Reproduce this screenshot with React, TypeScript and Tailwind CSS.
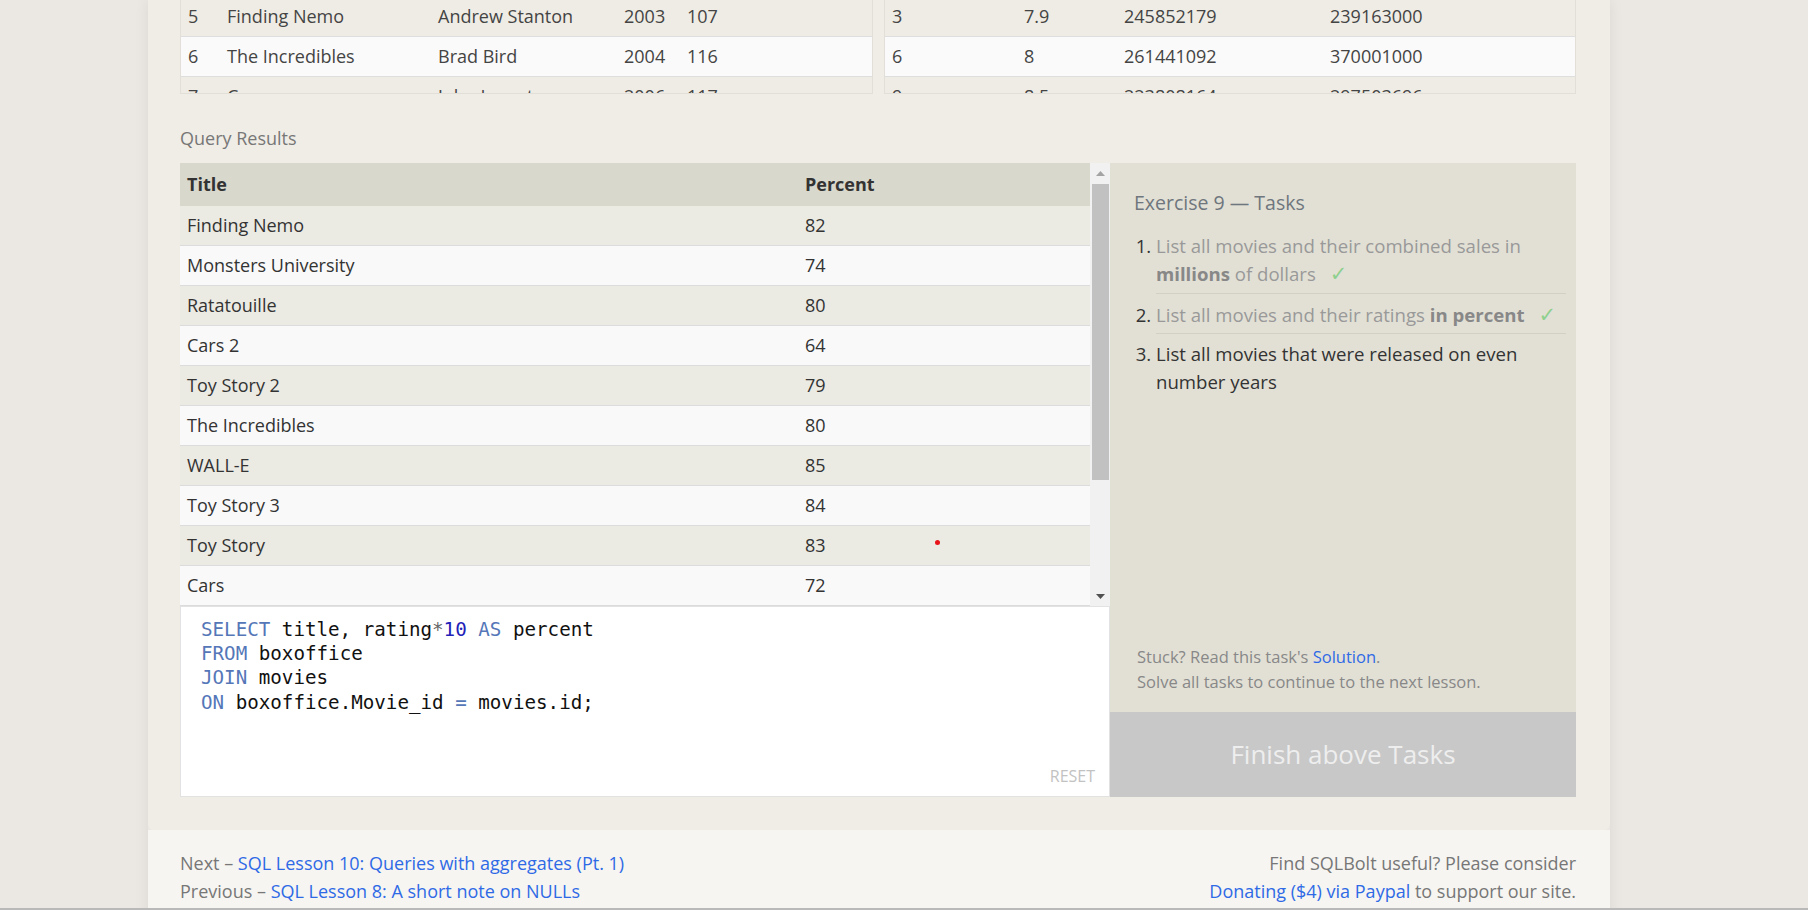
const movies = [
  ["5", "Finding Nemo", "Andrew Stanton", "2003", "107"],
  ["6", "The Incredibles", "Brad Bird", "2004", "116"],
  ["7", "Cars", "John Lasseter", "2006", "117"],
];

const boxoffice = [
  ["3", "7.9", "245852179", "239163000"],
  ["6", "8", "261441092", "370001000"],
  ["9", "8.5", "223808164", "297503696"],
];

const results = [
  ["Finding Nemo", "82"],
  ["Monsters University", "74"],
  ["Ratatouille", "80"],
  ["Cars 2", "64"],
  ["Toy Story 2", "79"],
  ["The Incredibles", "80"],
  ["WALL-E", "85"],
  ["Toy Story 3", "84"],
  ["Toy Story", "83"],
  ["Cars", "72"],
];

function Kw({ children }: { children: string }) {
  return <span className="text-[#5577b8]">{children}</span>;
}

function Check() {
  return (
    <span className="ml-[14px] text-[#8fd08f] font-['DejaVu_Sans',sans-serif] text-[21px] leading-none">
      ✓
    </span>
  );
}

export default function App() {
  return (
    <div className="h-[910px] overflow-hidden bg-[#ebe7e3] border-b-2 border-[#b9b9b9] font-['Open_Sans',sans-serif] text-[#333]">
      <div className="ml-[148px] w-[1462px] shadow-[0_0_14px_rgba(0,0,0,0.07)]">
        <div className="bg-[#f0ede6] rounded-b-[6px] pl-[32px] pr-[34px] pb-[33px]">
          {/* source tables, scrolled */}
          <div className="flex gap-[11px] h-[94px] overflow-hidden text-[18px] text-[#444]">
            <div className="w-[693px] border-x border-b border-[#e2dfd8] overflow-hidden">
              <div className="-mt-[3px]">
                {movies.map((r, i) => (
                  <div
                    key={r[0]}
                    className={`grid grid-cols-[39px_211px_186px_63px_1fr] h-[40px] items-center border-b border-[#dedede] pl-[7px] ${
                      i % 2 === 0 ? "bg-[#efece5]" : "bg-[#fafafa]"
                    }`}
                  >
                    {r.map((c, j) => (
                      <span key={j} className="whitespace-nowrap">
                        {c}
                      </span>
                    ))}
                  </div>
                ))}
              </div>
            </div>
            <div className="w-[692px] border-x border-b border-[#e2dfd8] overflow-hidden">
              <div className="-mt-[3px]">
                {boxoffice.map((r, i) => (
                  <div
                    key={r[0]}
                    className={`grid grid-cols-[132px_100px_206px_1fr] h-[40px] items-center border-b border-[#dedede] pl-[7px] ${
                      i % 2 === 0 ? "bg-[#efece5]" : "bg-[#fafafa]"
                    }`}
                  >
                    {r.map((c, j) => (
                      <span key={j} className="whitespace-nowrap">
                        {c}
                      </span>
                    ))}
                  </div>
                ))}
              </div>
            </div>
          </div>

          <div className="mt-[32px] mb-[13px] text-[18px] leading-[24px] text-[#777]">
            Query Results
          </div>

          <div className="flex">
            {/* results + editor */}
            <div className="w-[930px] flex flex-col">
              <div className="flex h-[443px]">
                <div className="relative flex-1 overflow-hidden text-[18px]">
                  <div className="grid grid-cols-[618px_1fr] h-[43px] items-center bg-[#d9d8cc] font-bold pl-[7px]">
                    <span>Title</span>
                    <span>Percent</span>
                  </div>
                  {results.map((r, i) => (
                    <div
                      key={r[0]}
                      className={`grid grid-cols-[618px_1fr] h-[40px] items-center border-b border-[#dcdcdc] pl-[7px] ${
                        i % 2 === 0 ? "bg-[#ebeae3]" : "bg-[#f9f9f9]"
                      }`}
                    >
                      <span>{r[0]}</span>
                      <span>{r[1]}</span>
                    </div>
                  ))}
                  <div className="absolute left-[755px] top-[377px] w-[5px] h-[5px] rounded-full bg-[#e8141a]" />
                </div>
                <div className="w-[20px] bg-[#f1f1f1] flex flex-col items-center">
                  <div className="h-[20px] flex items-center justify-center">
                    <svg width="9" height="5" viewBox="0 0 9 5">
                      <polygon points="0,5 4.5,0 9,5" fill="#a3a3a3" />
                    </svg>
                  </div>
                  <div className="w-[17px] h-[296px] mt-[1px] bg-[#c1c1c1]" />
                  <div className="flex-1" />
                  <div className="h-[20px] flex items-center justify-center">
                    <svg width="9" height="5" viewBox="0 0 9 5">
                      <polygon points="0,0 9,0 4.5,5" fill="#505050" />
                    </svg>
                  </div>
                </div>
              </div>
              <div className="h-[191px] bg-white border border-[#e2e2e2] flex flex-col">
                <pre className="flex-1 pl-[20px] pt-[11px] font-['DejaVu_Sans_Mono',monospace] text-[19.2px] leading-[24.2px] text-[#111]">
                  <Kw>SELECT</Kw> title, rating<span className="text-[#666]">*</span>
                  <span className="text-[#2222b8]">10</span> <Kw>AS</Kw> percent{"\n"}
                  <Kw>FROM</Kw> boxoffice{"\n"}
                  <Kw>JOIN</Kw> movies{"\n"}
                  <Kw>ON</Kw> boxoffice.Movie_id <Kw>=</Kw> movies.id;
                </pre>
                <div className="flex justify-end pr-[14px] pb-[10px] text-[16px] leading-[20px] text-[#c2c2c2]">
                  RESET
                </div>
              </div>
            </div>

            {/* tasks panel */}
            <div className="w-[466px] bg-[#e2e0d5] flex flex-col">
              <div className="flex-1 pl-[24px] pr-[10px] pt-[26px]">
                <div className="text-[19.5px] leading-[28px] text-[#6f767d]">
                  Exercise 9 — Tasks
                </div>
                <ol className="mt-[15px] list-decimal list-outside pl-[22px] text-[18.6px] leading-[27.7px]">
                  <li className="pb-[6px] border-b border-[#d2d0c5] text-[#999] marker:text-[#333]">
                    List all movies and their combined sales in{" "}
                    <b className="text-[#888]">millions</b> of dollars
                    <Check />
                  </li>
                  <li className="pt-[7px] pb-[4px] border-b border-[#d2d0c5] text-[#999] marker:text-[#333]">
                    List all movies and their ratings{" "}
                    <b className="text-[#888]">in percent</b>
                    <Check />
                  </li>
                  <li className="pt-[6px] text-[#333] marker:text-[#333]">
                    List all movies that were released on even number years
                  </li>
                </ol>
              </div>
              <div className="pl-[27px] pb-[18px] text-[16.5px] leading-[25px] text-[#888]">
                <div>
                  Stuck? Read this task's{" "}
                  <span className="text-[#2f6ae6]">Solution</span>.
                </div>
                <div>Solve all tasks to continue to the next lesson.</div>
              </div>
              <div className="h-[85px] bg-[#c8c8c8] flex items-center justify-center text-[26px] text-[#eeeeee]">
                Finish above Tasks
              </div>
            </div>
          </div>
        </div>

        {/* footer */}
        <div className="bg-[#f6f5f1] flex justify-between pl-[32px] pr-[34px] pt-[20px] pb-[20px] text-[18px] leading-[27.7px] text-[#777]">
          <div>
            <div>
              Next – <span className="text-[#2f6ae6]">SQL Lesson 10: Queries with aggregates (Pt. 1)</span>
            </div>
            <div>
              Previous – <span className="text-[#2f6ae6]">SQL Lesson 8: A short note on NULLs</span>
            </div>
          </div>
          <div className="text-right">
            <div>Find SQLBolt useful? Please consider</div>
            <div>
              <span className="text-[#2f6ae6]">Donating ($4) via Paypal</span> to support our site.
            </div>
          </div>
        </div>
      </div>
    </div>
  );
}
